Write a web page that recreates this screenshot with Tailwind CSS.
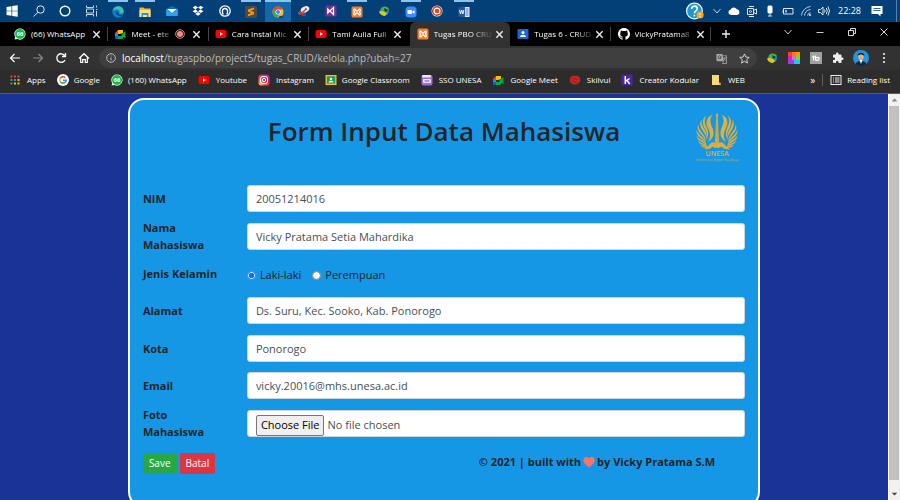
<!DOCTYPE html>
<html lang="id">
<head>
<meta charset="utf-8">
<title>Tugas PBO CRUD</title>
<script src="https://cdn.jsdelivr.net/npm/@tailwindcss/browser@4"></script>
</head>
<body class="flex h-screen flex-col overflow-hidden bg-[#193397] font-['Open_Sans','Noto_Sans',sans-serif] text-[9px] text-white">

<svg class="hidden" aria-hidden="true">
  <symbol id="wa" viewBox="0 0 12 12"><path d="M.6 11.6 1.2 9A5.6 5.6 0 1 1 3.4 11z" fill="#e8fff0"/><circle cx="6" cy="6" r="5" fill="#16b948"/><text x="6" y="8" text-anchor="middle" font-size="5.5" font-weight="700" fill="#fff">66</text></symbol>
  <symbol id="meet" viewBox="0 0 12 12"><path d="M4 2h5v3L6 6H4z" fill="#fbbc04"/><path d="M1 5 4 2v3z" fill="#ea4335"/><path d="M1 5h3v4H1z" fill="#2684fc"/><path d="M1 8h3v3H2a1 1 0 0 1-1-1z" fill="#0066da"/><path d="M4 8h5v2a1 1 0 0 1-1 1H4zM7.500 6.500 11.500 3v7L7.500 8z" fill="#00ac47"/></symbol>
  <symbol id="yt" viewBox="0 0 12 12"><rect x=".5" y="2" width="11" height="8" rx="2" fill="#f00"/><path d="m5 4.300 3 1.700-3 1.700z" fill="#fff"/></symbol>
  <symbol id="xampp" viewBox="0 0 12 12"><rect x=".5" y=".5" width="11" height="11" rx="1.500" fill="#fb7a24"/><path d="M3.500 3.200c1 0 1.500 2 2.500 2s1.500-2 2.500-2 1 1.500 0 2.800c1 1.300 1 2.800 0 2.800s-1.500-2-2.500-2-1.500 2-2.500 2-1-1.500 0-2.800c-1-1.300-1-2.800 0-2.800z" fill="none" stroke="#fff" stroke-width="1.300"/></symbol>
  <symbol id="idm" viewBox="0 0 12 12"><circle cx="6.500" cy="6" r="4.500" fill="#2586c8"/><path d="M3 4c2-3 6-3 8 0-1 2-4 1-5 2s-3 0-3-2z" fill="#55b52c"/><path d="M1 6.500c3-1 5-.5 8 2l-2 2.500C5 11 2 10 1 6.500z" fill="#d9c817"/><path d="M6 3 10 5 7 7z" fill="#143c20"/></symbol>
  <symbol id="x" viewBox="0 0 8 8"><path d="m1.200 1.200 5.600 5.600m0-5.600L1.200 6.800" stroke="#eee" stroke-width="1.200"/></symbol>
  <symbol id="chev" viewBox="0 0 10 10"><path d="m1.500 3 3.500 4L8.500 3" fill="none" stroke="#ccc"/></symbol>
</svg>

<header class="shrink-0">
  <!-- Taskbar -->
  <div class="flex h-[22px] items-center justify-between bg-[#024077]">
    <nav aria-label="Taskbar" class="-ml-px grid h-full w-[478px] shrink-0 grid-cols-18">
      <button aria-label="Start" class="flex items-center justify-center"><svg class="size-3" viewBox="0 0 12 12" fill="#fff"><path d="M.5 2 5.500 1.200v4.500h-5zM6.200 1.100 11.700.3v5.400H6.200zM.5 6.300h5v4.500l-5-.8zM6.200 6.300h5.500v5.400l-5.500-.8z"/></svg></button>
      <button aria-label="Search" class="flex items-center justify-center"><svg class="size-3" viewBox="0 0 12 12" fill="none" stroke="#e5edf5"><circle cx="7.500" cy="4.500" r="3.700"/><path d="M5 7.200.7 11.500"/></svg></button>
      <button aria-label="Cortana" class="flex items-center justify-center"><svg class="size-3" viewBox="0 0 12 12" fill="none" stroke="#fff" stroke-width="1.400"><circle cx="6" cy="6" r="4.800"/></svg></button>
      <button aria-label="Task view" class="flex items-center justify-center"><svg class="size-3" viewBox="0 0 12 12" fill="none" stroke="#c4d4e4"><path d="M.5.500v2h7v-2M.5 11.500v-2h7v2M.5 4h7v4h-7zM10.500.5v2m0 3.500v5.500M10 4.500h1.500"/></svg></button>
      <button aria-label="Edge" class="flex items-center justify-center"><span class="flex h-full w-5 items-center justify-center border-t-2 border-[#8cc4ec]"><svg class="size-3" viewBox="0 0 12 12"><circle cx="6" cy="6" r="5.700" fill="#1477c9"/><path d="M.4 5.500C1 2 3.500.3 6.300.3c3.500 0 5.500 2.600 5.400 5C11.500 7.500 9 8 7.300 7.300 8.500 5 6.500 3.300 4.500 3.500 2.500 3.600 1 4.500.4 5.500z" fill="#39c4a8"/><path d="M4.500 5.500c-1 3 1.500 5 5 4.500l1.300-1C8 9.500 6 8.500 6 6z" fill="#0a3f8f"/></svg></span></button>
      <button aria-label="File Explorer" class="flex items-center justify-center"><span class="flex h-full w-5 items-center justify-center border-t-2 border-[#8cc4ec]"><svg class="size-3" viewBox="0 0 12 12"><path d="M.5 1.500h4l1 1h6v8.500H.5z" fill="#f5b82e"/><path d="M.5 4h11v7H.5z" fill="#ffdf7c"/><path d="M2.500 7h7v4H8V9H4v2H2.500z" fill="#2d8fdd"/></svg></span></button>
      <button aria-label="Mail" class="flex items-center justify-center"><svg class="size-3" viewBox="0 0 12 12"><path d="M6 1 11.800 4v7H.2V4z" fill="#0f6ebd"/><path d="M1 4h10L6 8z" fill="#e8f6ff"/><path d="m.2 4.300 5.800 4 5.800-4V11H.2z" fill="#2aa4ec"/></svg></button>
      <button aria-label="Dropbox" class="flex items-center justify-center"><svg class="size-3" viewBox="0 0 12 12" fill="#fff"><path d="m3.300.8 2.700 1.800-2.700 1.800L.6 2.600zm5.400 0 2.700 1.800-2.700 1.800L6 2.600zM3.300 4.500 6 6.300 3.300 8.100.6 6.300zm5.400 0 2.700 1.800-2.700 1.800L6 6.300zM6 7l2.700 1.900L6 10.800 3.300 8.900z"/></svg></button>
      <button aria-label="OpenVPN" class="flex items-center justify-center"><svg class="size-3" viewBox="0 0 12 12" fill="none" stroke="#fff" stroke-width="1.300"><circle cx="6" cy="6" r="5.200"/><path d="M4.300 9.500c-1.500-2-1.300-6 1.700-6s3.200 4 1.700 6"/></svg></button>
      <button aria-label="Sublime Text" class="flex items-center justify-center"><span class="flex h-full w-5 items-center justify-center border-t-2 border-[#8cc4ec]"><svg class="size-3" viewBox="0 0 12 12"><rect width="12" height="12" rx="1.500" fill="#4a4a4a"/><path d="m3 3.500 6-2v2L5.500 4.700 9 6v2.300l-6 2v-2L6.500 7 3 5.800z" fill="#ff9800"/></svg></span></button>
      <button aria-label="Chrome" class="flex items-center justify-center border-t-2 border-[#8cc4ec] bg-[#1667a8]"><svg class="size-3" viewBox="0 0 12 12"><circle cx="6" cy="6" r="5.500" fill="#fbc116"/><path d="M1.200 3.300A5.500 5.500 0 0 1 10.900 3.500H6L3.800 7.200z" fill="#ea4335"/><path d="M1.200 3.300A5.500 5.500 0 0 0 5.500 11.500L8 7.500H4z" fill="#34a853"/><circle cx="6" cy="6" r="2.600" fill="#fff"/><circle cx="6" cy="6" r="2" fill="#4285f4"/><circle cx="9" cy="8" r="1.500" fill="#e9b08d"/><path d="M6.500 12c0-3 5-3 5 0z" fill="#253b6b"/></svg></button>
      <button aria-label="Snipping Tool" class="flex items-center justify-center"><svg class="size-3" viewBox="0 0 12 12"><ellipse cx="7" cy="4.500" rx="4.500" ry="3" fill="#e8eef5" transform="rotate(-25 7 4.500)"/><path d="m1 9 8-5M4 10l4-7" stroke="#d64545" stroke-width="1.200"/><circle cx="2" cy="8" r="1.400" fill="none" stroke="#d64545"/><circle cx="6" cy="9.500" r="1.400" fill="none" stroke="#d64545"/></svg></button>
      <button aria-label="Visual Studio" class="flex items-center justify-center"><svg class="size-3" viewBox="0 0 12 12"><rect x=".5" y=".5" width="11" height="11" fill="#7d2a9c"/><path d="M2.800 4v4L8.500 2.500v7z" fill="none" stroke="#fff" stroke-width="1.300"/></svg></button>
      <button aria-label="XAMPP" class="flex items-center justify-center"><span class="flex h-full w-5 items-center justify-center border-t-2 border-[#8cc4ec]"><svg class="size-3"><use href="#xampp"/></svg></span></button>
      <button aria-label="Download Manager" class="flex items-center justify-center"><svg class="size-3"><use href="#idm"/></svg></button>
      <button aria-label="Zoom" class="flex items-center justify-center"><span class="flex h-full w-5 items-center justify-center border-t-2 border-[#8cc4ec]"><svg class="size-3" viewBox="0 0 12 12"><rect x=".5" y=".5" width="11" height="11" rx="3.500" fill="#3f8cff"/><path d="M2.500 4h4.300v4H3.500a1 1 0 0 1-1-1zM7.300 5.500l2.200-1.300v3.600L7.300 6.500z" fill="#fff"/></svg></span></button>
      <button aria-label="Recorder" class="flex items-center justify-center"><svg class="size-3" viewBox="0 0 12 12"><circle cx="6" cy="6" r="5.500" fill="#fff"/><circle cx="6" cy="6" r="4.300" fill="none" stroke="#c8371f" stroke-width="1.500"/><circle cx="6" cy="6" r="2.300" fill="#e0481f"/></svg></button>
      <button aria-label="Word" class="flex items-center justify-center"><span class="flex h-full w-5 items-center justify-center border-t-2 border-[#8cc4ec]"><svg class="size-3" viewBox="0 0 12 12"><path d="M6 1h5.500v10H6z" fill="#e8eef8"/><path d="M7.500 3h3M7.500 5h3M7.500 7h3M7.500 9h3" stroke="#2b579a" stroke-width=".8"/><path d="M.3 1.500 7 .5v11l-6.700-1z" fill="#2b579a"/><path d="m1.500 4 1 4 1.200-4 1.200 4 1-4" fill="none" stroke="#fff" stroke-width=".9"/></svg></span></button>
    </nav>
    <div class="flex h-full items-center gap-1">
      <svg class="mr-1 size-[18px]" viewBox="0 0 16 16"><circle cx="7.500" cy="8" r="7" fill="#1b97d5" stroke="#fff"/><path d="M5 6.200c0-3.500 5-3 5-.3C10 8 7.500 7.800 7.500 10" fill="none" stroke="#fff" stroke-width="1.500"/><circle cx="7.500" cy="12" r=".9" fill="#fff"/><circle cx="12.500" cy="11.500" r="3.200" fill="#f5a81c"/><path d="M12.500 9.800v2m0 .700v1" stroke="#fff"/></svg>
      <svg class="mr-px size-[10px]"><use href="#chev"/></svg>
      <svg class="mx-px size-3" viewBox="0 0 12 12"><path d="M3 10a2.700 2.700 0 0 1-.6-5.300 3.500 3.500 0 0 1 6.400-.4A2.900 2.900 0 0 1 9.300 10z" fill="#fff"/></svg>
      <svg class="mx-px size-3" viewBox="0 0 12 12" fill="none" stroke="#dbe6f0"><path d="M1.500 3.500h6v6h-6zM7.500 5.500l3-1.500v5l-3-1.500M3 1.500h5M3 11.500h5"/><circle cx="4.500" cy="6.500" r="1"/></svg>
      <svg class="mx-px size-3" viewBox="0 0 12 12"><rect x="3.500" y=".5" width="5" height="8" rx="1.500" fill="#fff"/><path d="M6 8.500V11M4 11h4" stroke="#cfdcea"/></svg>
      <svg class="mx-px size-3" viewBox="0 0 12 12" fill="none" stroke="#dbe6f0"><path d="M1.500 3.500h9.500v5.500H1.500zM0 5.500v2"/><path d="M3 5h2v2.500H3z" stroke="none" fill="#9cb6cf"/></svg>
      <svg class="mx-px size-3" viewBox="0 0 12 12" fill="none" stroke="#b9cbdd"><path d="M1.500 10.500a10 10 0 0 1 9-9M4.500 10.500a7 7 0 0 1 6-6M7.500 10.500a4 4 0 0 1 3-3"/><circle cx="10" cy="10" r=".8" fill="#fff"/></svg>
      <svg class="mx-px size-3" viewBox="0 0 12 12" fill="none" stroke="#dbe6f0"><path d="M.5 4.500h2L5 2v8L2.500 7.500h-2zM6.500 4.500q1 1.500 0 3M8.300 3q2 3 0 6M10 1.500q3 4.500 0 9"/></svg>
      <time class="ml-[3px] w-6">22:28</time>
      <svg class="ml-[5px] size-3" viewBox="0 0 12 12"><path d="M.5 1h11v8H9.500v2.500L7 9H.5z" fill="#fff"/><path d="M2.500 3.500h7M2.500 5.500h7" stroke="#024077" stroke-width=".8"/></svg>
      <span class="mr-[3px] ml-[9px] h-full w-px bg-[#5a83a9]"></span>
    </div>
  </div>

  <!-- Tab strip -->
  <div class="flex h-6 items-center justify-between bg-black pl-2">
    <div class="grid h-full w-[703px] grid-cols-7 text-[8px] whitespace-nowrap">
      <div class="my-[5px] flex items-center border-r border-[#444] pl-[6px]"><svg class="size-3 shrink-0"><use href="#wa"/></svg><span class="ml-[5px] w-[60px]">(66) WhatsApp</span><button aria-label="Close tab" class="ml-px"><svg class="size-[9px]"><use href="#x"/></svg></button></div>
      <div class="my-[5px] flex items-center border-r border-[#444] pl-[6px]"><svg class="size-3 shrink-0"><use href="#meet"/></svg><span class="ml-[5px] w-[44px] mask-r-from-60%">Meet - ete</span><svg class="size-[10px] shrink-0" viewBox="0 0 10 10"><circle cx="5" cy="5" r="4.300" fill="none" stroke="#f28b82"/><circle cx="5" cy="5" r="3" fill="#f28b82"/></svg><button aria-label="Close tab" class="ml-[7px]"><svg class="size-[9px]"><use href="#x"/></svg></button></div>
      <div class="my-[5px] flex items-center border-r border-[#444] pl-[6px]"><svg class="size-3 shrink-0"><use href="#yt"/></svg><span class="ml-[5px] w-[60px] mask-r-from-70%">Cara Instal Mic</span><button aria-label="Close tab" class="ml-px"><svg class="size-[9px]"><use href="#x"/></svg></button></div>
      <div class="my-[5px] flex items-center pl-[6px]"><svg class="size-3 shrink-0"><use href="#yt"/></svg><span class="ml-[5px] w-[60px] mask-r-from-80%">Tami Aulia Full</span><button aria-label="Close tab" class="ml-px"><svg class="size-[9px]"><use href="#x"/></svg></button></div>
      <div class="flex items-center rounded-t-md bg-[#323233] pl-[7px]"><svg class="size-3 shrink-0"><use href="#xampp"/></svg><span class="ml-[5px] w-[60px] mask-r-from-60%">Tugas PBO CRU</span><button aria-label="Close tab" class="ml-px"><svg class="size-[9px]"><use href="#x"/></svg></button></div>
      <div class="my-[5px] flex items-center border-r border-[#444] pl-[7px]"><svg class="size-3 shrink-0" viewBox="0 0 12 12"><rect x=".5" y="1" width="11" height="10" rx="1" fill="#1a66d6"/><circle cx="6" cy="4.500" r="1.500" fill="#fff"/><path d="M3 9c0-3 6-3 6 0z" fill="#fff"/></svg><span class="ml-[5px] w-[60px] mask-r-from-70%">Tugas 6 - CRUD</span><button aria-label="Close tab" class="ml-px"><svg class="size-[9px]"><use href="#x"/></svg></button></div>
      <div class="my-[5px] flex items-center border-r border-[#444] pl-[7px]"><svg class="size-3 shrink-0" viewBox="0 0 16 16" fill="#fff"><path d="M8 0C3.580 0 0 3.580 0 8c0 3.540 2.290 6.530 5.470 7.590.4.070.55-.17.55-.38 0-.19-.01-.82-.01-1.490-2.010.37-2.530-.49-2.690-.94-.09-.23-.48-.94-.82-1.130-.28-.15-.68-.52-.01-.53.63-.01 1.080.58 1.230.82.72 1.210 1.870.87 2.330.66.07-.52.28-.87.51-1.070-1.780-.2-3.640-.89-3.640-3.950 0-.87.31-1.590.82-2.150-.08-.2-.36-1.020.08-2.120 0 0 .67-.21 2.200.82a7.600 7.600 0 0 1 4 0c1.530-1.040 2.200-.82 2.200-.82.44 1.100.16 1.920.08 2.120.51.56.82 1.270.82 2.150 0 3.070-1.870 3.750-3.650 3.950.29.25.54.73.54 1.480 0 1.070-.01 1.930-.01 2.200 0 .21.15.46.55.38A8 8 0 0 0 16 8c0-4.420-3.580-8-8-8z"/></svg><span class="ml-[5px] w-[60px] mask-r-from-70%">VickyPratama8</span><button aria-label="Close tab" class="ml-px"><svg class="size-[9px]"><use href="#x"/></svg></button></div>
    </div>
    <button aria-label="New tab" class="mr-auto ml-[10px]"><svg class="size-[10px]" viewBox="0 0 10 10" stroke="#eee" stroke-width="1.400"><path d="M5 1v8M1 5h8"/></svg></button>
    <div class="flex h-5 self-start">
      <button aria-label="Search tabs" class="flex w-8 items-center justify-center"><svg class="size-[10px]"><use href="#chev"/></svg></button>
      <button aria-label="Minimize" class="flex w-8 items-center justify-center"><svg class="size-2" viewBox="0 0 8 8"><path d="M.5 4.500h7" stroke="#ccc"/></svg></button>
      <button aria-label="Restore" class="flex w-8 items-center justify-center"><svg class="size-2" viewBox="0 0 8 8" fill="none" stroke="#ddd"><path d="M.5 2.500h5v5h-5zM2.500 2V.5h5v5H6"/></svg></button>
      <button aria-label="Close window" class="flex w-8 items-center justify-center"><svg class="size-2" viewBox="0 0 8 8" stroke="#ddd"><path d="m.5.500 7 7m0-7-7 7"/></svg></button>
    </div>
  </div>

  <!-- Toolbar -->
  <div class="flex h-6 items-center bg-[#323233] pr-[10px] pl-[9px]">
    <div class="flex shrink-0 gap-[11px]">
      <button aria-label="Back"><svg class="size-3" viewBox="0 0 12 12" fill="none" stroke="#fff" stroke-width="1.200"><path d="M11 6H1.500m4-4-4 4 4 4"/></svg></button>
      <button aria-label="Forward"><svg class="size-3" viewBox="0 0 12 12" fill="none" stroke="#888" stroke-width="1.200"><path d="M1 6h9.500m-4-4 4 4-4 4"/></svg></button>
      <button aria-label="Reload"><svg class="size-3" viewBox="0 0 12 12" fill="none" stroke="#fff" stroke-width="1.300"><path d="M10 8A4.300 4.300 0 1 1 9.600 3.500M10.500 1v3.500H7"/></svg></button>
      <button aria-label="Home"><svg class="size-3" viewBox="0 0 12 12" fill="none" stroke="#fff" stroke-width="1.200"><path d="M1 6.500 6 1.700l5 4.800M2.700 5.500v5h2v-3h2.600v3h2v-5"/></svg></button>
    </div>
    <div class="ml-[9px] flex h-5 flex-1 items-center rounded-full bg-[#3f3f40] px-[7px]">
      <svg class="size-[10px] shrink-0" viewBox="0 0 10 10" fill="none" stroke="#bbb"><circle cx="5" cy="5" r="4.300"/><path d="M5 4.500v3M5 2.500v1"/></svg>
      <p class="ml-[6px] flex-1 text-[10px] text-[#bdbdbd]"><span class="text-white">localhost</span>/tugaspbo/project5/tugas_CRUD/kelola.php?ubah=27</p>
      <button aria-label="Translate" class="mr-3"><svg class="size-[11px]" viewBox="0 0 12 12"><path d="M.5 1h6.500l1.500 8H2A1.500 1.500 0 0 1 .5 7.500z" fill="#aaa"/><path d="M5.500 4.500c0-2-3.200-2-3.200.2S5.500 7 5.500 5H4" fill="none" stroke="#3f3f40" stroke-width=".9"/><path d="M8 3h3.500v8.500H7L8.500 9M8.500 5.500h2.500M9.500 5v1c0 1.500-1 2-1 2m-.5-2 2.500 2.500" fill="none" stroke="#aaa" stroke-width=".9"/></svg></button>
      <button aria-label="Bookmark"><svg class="size-[11px]" viewBox="0 0 12 12" fill="none" stroke="#ddd"><path d="m6 1 1.500 3.400 3.700.4-2.800 2.500.8 3.700L6 9.100 2.800 11l.8-3.700L.8 4.800l3.700-.4z"/></svg></button>
    </div>
    <div class="ml-[9px] flex shrink-0 items-center gap-[10px]">
      <svg class="size-3"><use href="#idm"/></svg>
      <svg class="size-3" viewBox="0 0 12 12"><path d="M0 0h12v4H0z" fill="#f6402c"/><path d="M4 0h4v4H4z" fill="#ff7a1a"/><path d="M8 0h4v4H8z" fill="#ff9800"/><path d="M0 4h4v4H0z" fill="#e91e9c"/><path d="M4 4h4v4H4z" fill="#d86bd8"/><path d="M8 4h4v4H8z" fill="#8bd12a"/><path d="M0 8h6v4H0z" fill="#a23af0"/><path d="M6 8h6v4H6z" fill="#25c7e8"/></svg>
      <svg class="size-3" viewBox="0 0 12 12"><path d="M0 0h12v12H0z" fill="#a0a0a0"/><path d="M3.500 3.500v5M2 5h3M5.500 3.500v5M6 6c2.500-1.500 3.500 0 3 1S7.500 9 6 8" fill="none" stroke="#fff" stroke-width="1.200"/></svg>
      <button aria-label="Extensions"><svg class="size-3" viewBox="0 0 24 24" fill="#eee"><path d="M20.500 11H19V7a2 2 0 0 0-2-2h-4V3.500a2.500 2.500 0 0 0-5 0V5H4a2 2 0 0 0-2 2v3.800h1.500a2.700 2.700 0 0 1 0 5.400H2V20a2 2 0 0 0 2 2h3.800v-1.500a2.700 2.700 0 0 1 5.400 0V22H17a2 2 0 0 0 2-2v-4h1.500a2.500 2.500 0 0 0 0-5z"/></svg></button>
      <button aria-label="Profile"><svg class="-mx-px size-4" viewBox="0 0 16 16"><circle cx="8" cy="8" r="8" fill="#2196e0"/><path d="M2.500 14c1-4 10-4 11 0a8 8 0 0 1-11 0z" fill="#17233f"/><path d="M6.500 10h3L8 14z" fill="#fff"/><ellipse cx="8" cy="6.500" rx="2.800" ry="3.500" fill="#e2ae8b"/><path d="M4.800 6C4 1.500 12 1.500 11.200 6 10 4 6 4 4.800 6z" fill="#151515"/></svg></button>
      <button aria-label="Menu"><svg class="size-3" viewBox="0 0 12 12" fill="#eee"><circle cx="6" cy="2" r="1.100"/><circle cx="6" cy="6" r="1.100"/><circle cx="6" cy="10" r="1.100"/></svg></button>
    </div>
  </div>

  <!-- Bookmarks -->
  <nav aria-label="Bookmarks" class="flex h-6 items-center gap-[11px] border-b border-[#5c5c5c] bg-[#2c2c2d] pr-[10px] pb-[3px] pl-[9px] text-[8px] whitespace-nowrap">
    <a href="#" class="flex items-center gap-[6px]"><svg class="size-3" viewBox="0 0 12 12"><path d="M1.500 1.500h2v2h-2zM5 1.500h2v2H5zM8.500 1.500h2v2h-2z" fill="#ea4335"/><path d="M1.500 5h2v2h-2zM1.500 8.500h2v2h-2z" fill="#34a853"/><path d="M5 5h2v2H5z" fill="#4285f4"/><path d="M8.500 5h2v2h-2zM5 8.500h2v2H5zM8.500 8.500h2v2h-2z" fill="#fbbc04"/></svg>Apps</a>
    <a href="#" class="flex items-center gap-[5px]"><svg class="size-3" viewBox="0 0 12 12" fill="none" stroke-width="1.500"><circle cx="6" cy="6" r="6" fill="#fff"/><path d="M8.300 3.700A3.200 3.200 0 0 0 3.200 4.500" stroke="#ea4335"/><path d="M3.200 4.500a3.200 3.200 0 0 0 0 3" stroke="#fbbc04"/><path d="M3.200 7.500a3.200 3.200 0 0 0 4.800.9" stroke="#34a853"/><path d="M6 6.200h3.200c0 1-.5 1.800-1.200 2.200" stroke="#4285f4"/></svg>Google</a>
    <a href="#" class="flex items-center gap-[5px]"><svg class="size-3"><use href="#wa"/></svg>(160) WhatsApp</a>
    <a href="#" class="flex items-center gap-[6px]"><svg class="size-3"><use href="#yt"/></svg>Youtube</a>
    <a href="#" class="flex items-center gap-[6px]"><svg class="size-3" viewBox="0 0 12 12"><defs><linearGradient id="ig" x1="0" y1="1" x2="1" y2="0"><stop stop-color="#fdc04a"/><stop offset=".5" stop-color="#e8304f"/><stop offset="1" stop-color="#9030c8"/></linearGradient></defs><rect x=".5" y=".5" width="11" height="11" rx="2.500" fill="url(#ig)"/><rect x="2.500" y="2.500" width="7" height="7" rx="2" fill="none" stroke="#fff"/><circle cx="6" cy="6" r="1.700" fill="none" stroke="#fff"/></svg>Instagram</a>
    <a href="#" class="flex items-center gap-[5px]"><svg class="size-3" viewBox="0 0 12 12"><path d="M.5 1h11v10H.5z" fill="#f7c21a"/><path d="M1.800 2.300h8.400v7.400H1.800z" fill="#1f9d58"/><circle cx="6" cy="5" r="1.200" fill="#fff"/><path d="M3.500 8.500c0-2.500 5-2.500 5 0z" fill="#fff"/></svg>Google Classroom</a>
    <a href="#" class="flex items-center gap-[6px]"><svg class="size-3" viewBox="0 0 12 12"><rect x=".5" y="1" width="11" height="10.500" rx="2" fill="#9c6ade"/><rect x="1" y="1" width="9" height="2.500" rx="1" fill="#efe3ff"/><rect x="2" y="5" width="8" height="4" rx="1" fill="#efe3ff"/><path d="M3.500 7h5" stroke="#6d3fc0"/></svg>SSO UNESA</a>
    <a href="#" class="flex items-center gap-[6px]"><svg class="size-3"><use href="#meet"/></svg>Google Meet</a>
    <a href="#" class="flex items-center gap-[6px]"><svg class="size-3" viewBox="0 0 12 12"><path d="M.8 6c0-3 2.500-5 5-4 3-1 5.400 1 5.400 4S8.500 10.500 6 10.500.8 9 .8 6z" fill="#c62828"/><path d="M3 5q1.500-2 3 0t3 0M3 8q1.500-2 3 0t3 0" fill="none" stroke="#801515" stroke-width=".8"/></svg>Skilvul</a>
    <a href="#" class="flex items-center gap-[6px]"><svg class="size-3" viewBox="0 0 12 12"><path d="M.5.500h11v11H.5z" fill="#4a25aa"/><path d="M4.300 2v8M8.500 4.500 4.800 7.200M6 6.500 8.700 10" fill="none" stroke="#fff" stroke-width="1.500"/></svg>Creator Kodular</a>
    <a href="#" class="flex items-center gap-[6px]"><svg class="size-3" viewBox="0 0 12 12"><path d="M2 1h7v8.500h1.500V11H2z" fill="#f8d978"/><path d="M9 8.500h1.500V11H9z" fill="#e3b94c"/></svg>WEB</a>
    <button aria-label="More bookmarks" class="ml-auto text-[10px]">»</button>
    <span class="-mx-1 h-3 w-px bg-[#5c5c5c]"></span>
    <button class="flex items-center gap-[5px]"><svg class="size-3" viewBox="0 0 12 12" fill="none" stroke="#eee"><rect x="1" y="1.500" width="10" height="9"/><path d="M3 4h1m1 0h4.500M3 6h1m1 0h4.500M3 8h1m1 0h4.500"/></svg>Reading list</button>
  </nav>
</header>

<!-- Page -->
<div class="flex min-h-0 flex-1">
  <main class="min-w-0 flex-1 overflow-hidden pt-1">
    <section class="mx-auto w-[71.2%] rounded-[16px] border-2 border-white bg-[#1697e6] px-[13px] pb-8 text-[11px] text-[#212529]">
      <div class="relative flex h-20 justify-center pt-[11px]">
        <h1 class="text-[26px] leading-10 font-semibold">Form Input Data Mahasiswa</h1>
        <svg class="absolute top-[13px] right-1 h-[50px] w-12" viewBox="0 0 48 50" role="img" aria-label="UNESA">
          <g id="logo-wing" fill="#e0ae3c">
            <path d="M28.500 2C34 3.500 36 9 33 15c-2.500 5-3 9 0 14-5-3-7-8-4.500-14C31 9.500 31.500 5.500 28.500 2z"/>
            <path d="M34.500 2.500c4.500 3 4.500 8 2 12.500s-3 7-2.500 11c-2-4-1.500-8 .5-12s2.500-7.500 0-11.500z"/>
            <path d="M39.500 6.500c2.500 4 1 8-1.500 11.500s-3.500 6-3.500 9.500c-1-3.500 0-7.500 2-11s3.500-6 3-10z"/>
            <path d="M42.800 11.500c1.500 4-.3 7-3 10s-4 5-4.300 7.500c-.7-3 .8-6 3-8.800s4-5 4.300-8.700z"/>
            <path d="M44.300 17c.7 3.500-1 6-4 8.200s-4.500 3.800-5 6c-.3-2.600 1.200-5 3.700-7.200s4.500-4 5.300-7z"/>
            <path d="M44.300 22.500c0 3.300-2 5-4.500 6.300S35.500 31 34.500 33c0-2.500 1.500-4.200 4-5.500s4.500-2.500 5.800-5z"/>
            <path d="M43 27.500c-.5 2.500-2.500 3.800-4.500 4.300s-4 1.200-5 2.700c.2-2.200 2-3.500 4.200-4s4-1.300 5.300-3z"/>
            <path d="M41 31.500c-1.500 2.500-3.500 3-5 3S33 35 32 36c.3-2 1.800-2.800 3.800-3s3.700-.5 5.200-1.500z"/>
            <path d="M24 31c3-2.500 5.500-2 7.500.5 1.200 1.500 3 3.500 5.500 4.500-4 1-7-.5-8.500-2.500-1.500 1.300-3 2-4.500 1z"/>
          </g>
          <use href="#logo-wing" transform="matrix(-1 0 0 1 48 0)"/>
          <path d="M24 0l1.300 2-.5 1L26 29 24 32l-2-3L23.200 3l-.5-1z" fill="#e0ae3c"/>
          <path d="M24 4v26" stroke="#9c9a61" stroke-width=".6"/>
          <text x="24" y="43" text-anchor="middle" font-size="7" font-weight="600" fill="#e0ae3c">UNESA</text>
          <text x="24" y="48" text-anchor="middle" font-size="3.300" fill="#c0a850">Universitas Negeri Surabaya</text>
        </svg>
      </div>

      <form>
        <div class="grid h-[262px] grid-rows-7">
          <div class="flex items-center"><div class="w-[104px] shrink-0 pr-6 leading-[17px] font-bold"><label for="nim">NIM</label></div><input id="nim" value="20051214016" class="h-[27px] min-w-0 flex-1 rounded-[3px] border border-[#ced4da] bg-white px-2 text-[#495057]"></div>
          <div class="flex items-center"><div class="w-[104px] shrink-0 pr-6 leading-[17px] font-bold"><label for="nama">Nama Mahasiswa</label></div><input id="nama" value="Vicky Pratama Setia Mahardika" class="h-[27px] min-w-0 flex-1 rounded-[3px] border border-[#ced4da] bg-white px-2 text-[#495057]"></div>
          <div class="flex items-center" role="radiogroup" aria-labelledby="jk"><div id="jk" class="w-[104px] shrink-0 leading-[17px] font-bold">Jenis Kelamin</div>
            <div class="flex gap-[11px] pt-1">
              <label class="flex items-center gap-1"><input type="radio" name="jk" checked class="size-[9px]">Laki-laki</label>
              <label class="flex items-center gap-1"><input type="radio" name="jk" class="size-[9px]">Perempuan</label>
            </div></div>
          <div class="flex items-center"><div class="w-[104px] shrink-0 pr-6 leading-[17px] font-bold"><label for="alamat">Alamat</label></div><input id="alamat" value="Ds. Suru, Kec. Sooko, Kab. Ponorogo" class="h-[27px] min-w-0 flex-1 rounded-[3px] border border-[#ced4da] bg-white px-2 text-[#495057]"></div>
          <div class="flex items-center"><div class="w-[104px] shrink-0 pr-6 leading-[17px] font-bold"><label for="kota">Kota</label></div><input id="kota" value="Ponorogo" class="h-[27px] min-w-0 flex-1 rounded-[3px] border border-[#ced4da] bg-white px-2 text-[#495057]"></div>
          <div class="flex items-center"><div class="w-[104px] shrink-0 pr-6 leading-[17px] font-bold"><label for="email">Email</label></div><input id="email" value="vicky.20016@mhs.unesa.ac.id" class="h-[27px] min-w-0 flex-1 rounded-[3px] border border-[#ced4da] bg-white px-2 text-[#495057]"></div>
          <div class="flex items-center"><div class="w-[104px] shrink-0 pr-6 leading-[17px] font-bold"><label for="foto">Foto Mahasiswa</label></div><input id="foto" type="file" class="h-[27px] min-w-0 flex-1 overflow-hidden rounded-[3px] border border-[#ced4da] bg-white px-2 pt-1 text-[11px] text-[#495057] file:mr-[3px] file:h-[21px] file:rounded-[2px] file:border file:border-solid file:border-[#767676] file:bg-[#efefef] file:px-1 file:text-black"></div>
        </div>
        <div class="flex items-start justify-between pt-[11px] pr-[30px]">
          <div class="flex gap-[3px] text-[10px] text-white">
            <button type="submit" class="h-[21px] rounded-[2px] bg-[#28a745] px-[6px]">Save</button>
            <button type="button" class="h-[21px] rounded-[2px] bg-[#dc3545] px-[6px]">Batal</button>
          </div>
          <p class="flex items-center gap-[2px] leading-[18px] font-bold">© 2021 | built with <svg class="h-3 w-3" viewBox="0 0 12 12" role="img" aria-label="love"><path d="M6 11.500C2 8.500.3 6.500.3 4.100.3 1 4.200-.2 6 2.300 7.800-.2 11.700 1 11.700 4.100c0 2.400-1.700 4.400-5.700 7.400z" fill="#fa7268"/></svg> by Vicky Pratama S.M</p>
        </div>
      </form>
    </section>
  </main>
  <div class="flex w-3 flex-col border-l border-white bg-[#f1f1f1]" aria-hidden="true">
    <svg class="h-3 w-full" viewBox="0 0 12 12"><path d="m6 4 3 3.500H3z" fill="#888"/></svg>
    <div class="mr-px flex-1 bg-[#c1c1c1]"></div>
    <svg class="mt-2 h-3 w-full" viewBox="0 0 12 12"><path d="M3 4.500h6L6 7.500z" fill="#444"/></svg>
  </div>
</div>
</body>
</html>
